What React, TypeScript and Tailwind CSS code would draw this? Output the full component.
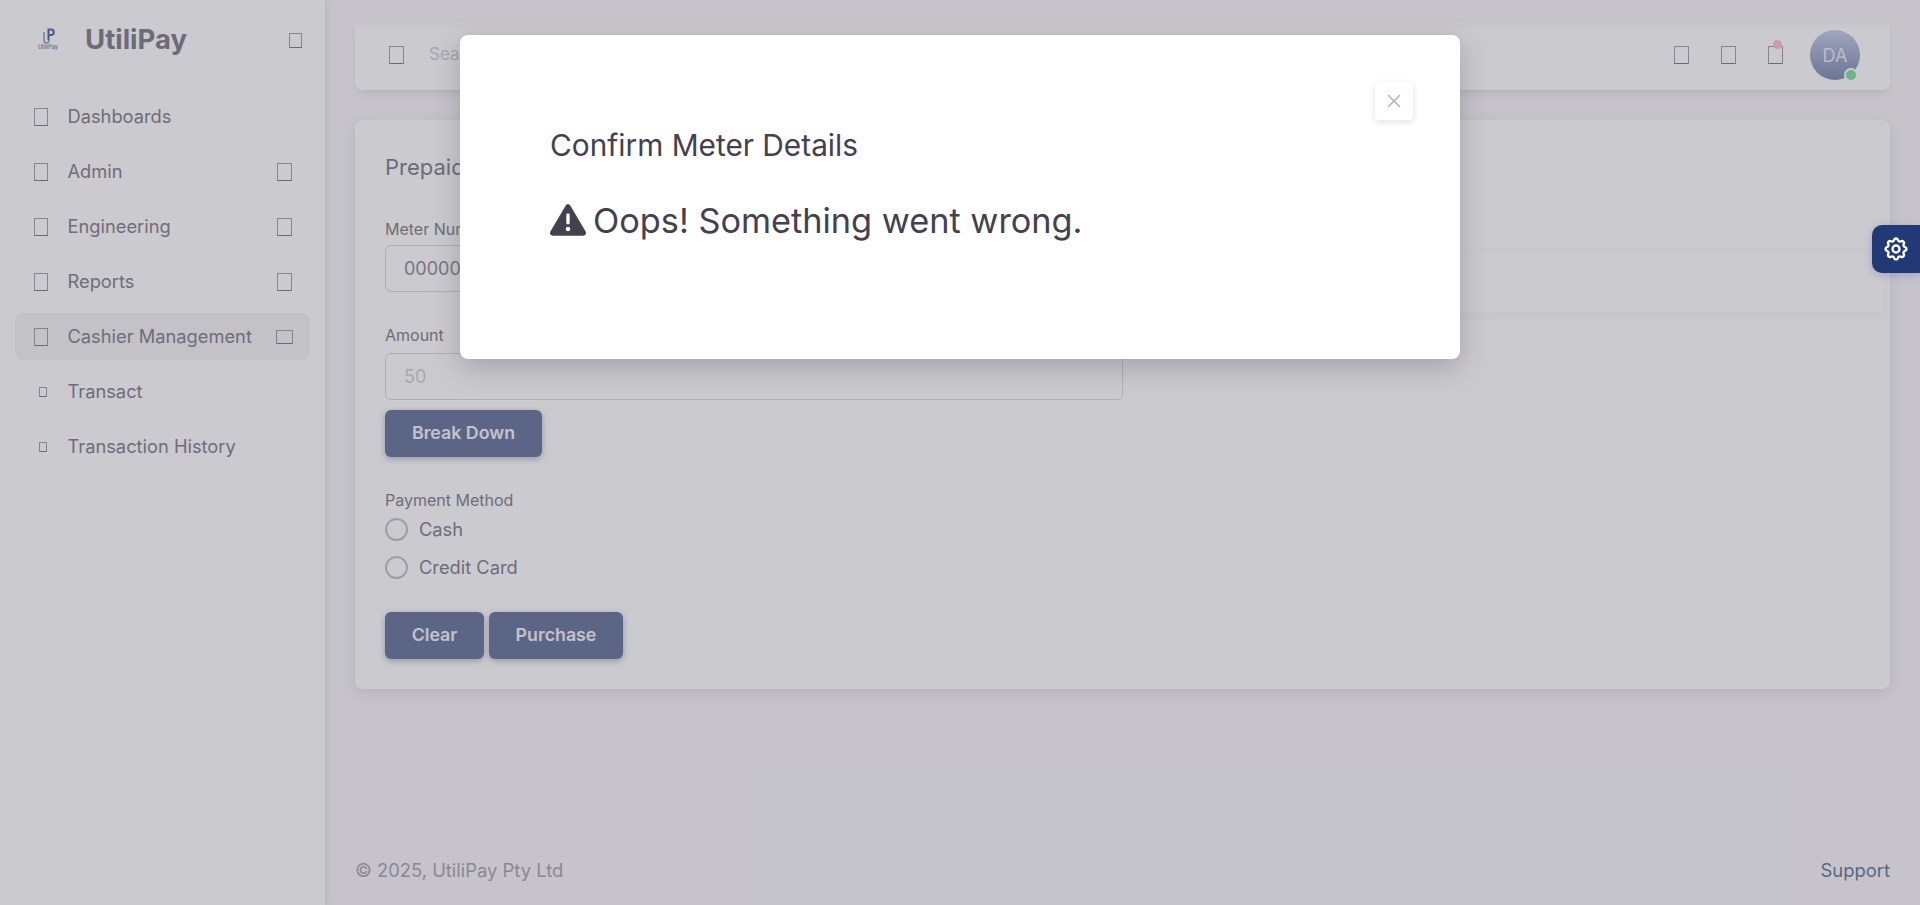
// UtiliPay cashier page behind the "Confirm Meter Details" error modal.
import { X } from 'lucide-react';
import { FaTriangleExclamation } from 'react-icons/fa6';
import { TbSettings } from 'react-icons/tb';

// Icon font never loaded in the original, so icons show as empty glyph boxes.
function Tofu({ className }: { className: string }) {
  return <span className={`block shrink-0 border border-[#a3a2ad] border-b-[#7f7e8a] ${className}`} />;
}

const NAV = [
  { label: 'Dashboards', arrow: false },
  { label: 'Admin', arrow: true },
  { label: 'Engineering', arrow: true },
  { label: 'Reports', arrow: true },
];

function Logo() {
  return (
    <div className="flex h-[28px] w-[24px] flex-col items-center">
      <svg width="16" height="20" viewBox="0 0 16 20" fill="none" className="shrink-0">
        <path d="M4 6v7.500c0 2.200 1 3.500 2.500 3.500S9 15.700 9 13.500" stroke="#98a0b8" strokeWidth="1.600" />
        <path d="M8.500 14V3.500h2.500a2.800 2.800 0 0 1 0 5.600H8.500" stroke="#5469a8" strokeWidth="2" />
      </svg>
      <span className="-mt-[2px] text-[5.500px] leading-[7px] font-semibold whitespace-nowrap text-[#7f8db5]">
        UtiliPay
      </span>
    </div>
  );
}

function Sidebar() {
  return (
    <aside className="flex h-full w-[325px] shrink-0 flex-col bg-white shadow-[0_2px_8px_rgba(47,43,61,0.12)]">
      <div className="flex h-[80px] items-center pr-[23px] pl-[36px]">
        <Logo />
        <span className="ml-[25px] flex-1 text-[27.500px] font-bold text-[#82818e]">UtiliPay</span>
        <Tofu className="h-[15px] w-[13px]" />
      </div>
      <nav className="mt-[13px] flex flex-col gap-[8px] px-[15px]">
        {NAV.map((item) => (
          <div key={item.label} className="flex h-[47px] items-center pr-[18px] pl-[19px]">
            <Tofu className="h-[18px] w-[14px]" />
            <span className="ml-[19.500px] flex-1 pt-[1px] text-[18.300px] text-[#848390]">{item.label}</span>
            {item.arrow && <Tofu className="h-[18px] w-[15px]" />}
          </div>
        ))}
        <div className="flex h-[47px] items-center rounded-lg bg-[#f5f5f6] pr-[17px] pl-[19px]">
          <Tofu className="h-[18px] w-[14px]" />
          <span className="ml-[19.500px] flex-1 pt-[1px] text-[18.300px] whitespace-nowrap text-[#848390]">
            Cashier Management
          </span>
          <Tofu className="h-[14px] w-[17px]" />
        </div>
        {['Transact', 'Transaction History'].map((label) => (
          <div key={label} className="flex h-[47px] items-center pl-[24px]">
            <Tofu className="h-[10px] w-[8px]" />
            <span className="ml-[20.500px] pt-[1px] text-[18.300px] text-[#848390]">{label}</span>
          </div>
        ))}
      </nav>
    </aside>
  );
}

function Navbar() {
  return (
    <header className="mt-[20px] flex h-[70px] shrink-0 items-center rounded-b-lg bg-gradient-to-b from-white/0 to-white to-[14%] pr-[30px] pl-[34px] shadow-[0_6px_10px_-4px_rgba(47,43,61,0.14)]">
      <Tofu className="h-[18px] w-[15px]" />
      <span className="ml-[25px] flex-1 text-[17px] text-[#d2d1d7]">Search</span>
      <div className="flex -translate-x-[1px] items-center gap-[32px]">
        <Tofu className="h-[18px] w-[15px]" />
        <Tofu className="h-[18px] w-[15px]" />
        <div className="relative">
          <Tofu className="h-[18px] w-[15px]" />
          <span className="absolute -top-[6px] left-[5px] h-[9px] w-[9px] rounded-full bg-[#ffc2cc]" />
        </div>
      </div>
      <div className="relative ml-[26px] flex h-[50px] w-[50px] items-center justify-center rounded-full bg-gradient-to-b from-[#c7cfe8] to-[#7f8eb4] text-[18px] text-[#e8ebf4]">
        DA
        <span className="absolute right-[2px] bottom-[-2px] h-[14px] w-[14px] rounded-full border-2 border-white bg-[#7fe0a8]" />
      </div>
    </header>
  );
}

function FieldLabel({ children }: { children: string }) {
  return <label className="block text-[16px] leading-[20px] text-[#848390]">{children}</label>;
}

function PrimaryButton({ children, className }: { children: string; className: string }) {
  return (
    <button
      type="button"
      className={`h-[47px] rounded-md bg-[#6a7aa1] text-[17.800px] font-semibold text-[#f4f4f7] shadow-[0_2px_6px_rgba(106,122,161,0.5)] ${className}`}
    >
      {children}
    </button>
  );
}

function PurchaseCard() {
  return (
    <section className="mt-[30px] h-[569px] shrink-0 rounded-lg bg-white px-[30px] pt-[32px] shadow-[0_4px_14px_rgba(47,43,61,0.1)]">
      <h2 className="text-[22px] leading-[30px] font-normal text-[#82818e]">Prepaid Purchase</h2>
      <div className="flex gap-[30px]">
        <div className="w-[738px] shrink-0">
          <div className="mt-[37px]">
            <FieldLabel>Meter Number</FieldLabel>
          </div>
          <div className="mt-[6px] flex h-[47px] items-center rounded-md border border-[#dbdae0] pl-[18px] text-[18px] text-[#8f8e9a]">
            00000000000
          </div>
          <div className="mt-[33px]">
            <FieldLabel>Amount</FieldLabel>
          </div>
          <div className="mt-[8px] flex h-[47px] items-center rounded-md border border-[#dbdae0] pl-[18px] text-[18px] text-[#d2d1d7]">
            50
          </div>
          <PrimaryButton className="mt-[10px] w-[157px]">Break Down</PrimaryButton>
          <div className="mt-[33px]">
            <FieldLabel>Payment Method</FieldLabel>
          </div>
          <div className="mt-[8px] flex flex-col gap-[15px]">
            {['Cash', 'Credit Card'].map((label) => (
              <div key={label} className="flex h-[23px] items-center gap-[11px]">
                <span className="h-[23px] w-[23px] rounded-full border-2 border-[#c5c4cb]" />
                <span className="text-[18.300px] text-[#848390]">{label}</span>
              </div>
            ))}
          </div>
          <div className="mt-[33px] flex gap-[5px]">
            <PrimaryButton className="w-[99px]">Clear</PrimaryButton>
            <PrimaryButton className="w-[134px]">Purchase</PrimaryButton>
          </div>
        </div>
        <div className="mt-[70px] h-[61px] flex-1 translate-x-[24px] rounded-lg shadow-[0_2px_8px_rgba(47,43,61,0.06)]" />
      </div>
    </section>
  );
}

function ErrorModal() {
  return (
    <div className="absolute inset-0 z-10 flex justify-center bg-[#2f2b3d]/25 pt-[35px]">
      <div className="relative h-[324px] w-[1000px] rounded-lg bg-white pt-[90px] pl-[90px] shadow-[0_8px_28px_rgba(47,43,61,0.25)]">
        <button
          type="button"
          className="absolute top-[47px] right-[47px] flex h-[38px] w-[38px] items-center justify-center rounded bg-white text-[#b5b4bb] shadow-[0_2px_6px_rgba(47,43,61,0.14)]"
        >
          <X size={22} strokeWidth={1.800} />
        </button>
        <h5 className="text-[29.800px] leading-[40px] font-normal text-[#444050]">Confirm Meter Details</h5>
        <div className="mt-[31px] flex items-center gap-[8px] text-[34.300px] leading-[50px] text-[#444050]">
          <FaTriangleExclamation size={36} className="-mt-[2px] shrink-0" />
          <span className="-ml-[1px]">Oops! Something went wrong.</span>
        </div>
      </div>
    </div>
  );
}

export default function App() {
  return (
    <div className="relative flex h-[905px] w-[1920px] overflow-hidden bg-[#f8f7fa] font-['Inter',sans-serif]">
      <Sidebar />
      <main className="flex min-w-0 flex-1 flex-col pr-[30px] pl-[30px]">
        <Navbar />
        <PurchaseCard />
        <footer className="mt-[169px] flex justify-between text-[18.400px] leading-[24px]">
          <span className="text-[#a8a7b2]">© 2025, UtiliPay Pty Ltd</span>
          <span className="text-[#6a7aa1]">Support</span>
        </footer>
      </main>
      <ErrorModal />
      <button
        type="button"
        className="absolute top-[225px] right-0 z-20 flex h-[48px] w-[48px] items-center justify-center rounded-l-[10px] bg-[#213a76] text-white shadow-[0_2px_8px_rgba(80,70,200,0.3)]"
      >
        <TbSettings size={28} />
      </button>
    </div>
  );
}
